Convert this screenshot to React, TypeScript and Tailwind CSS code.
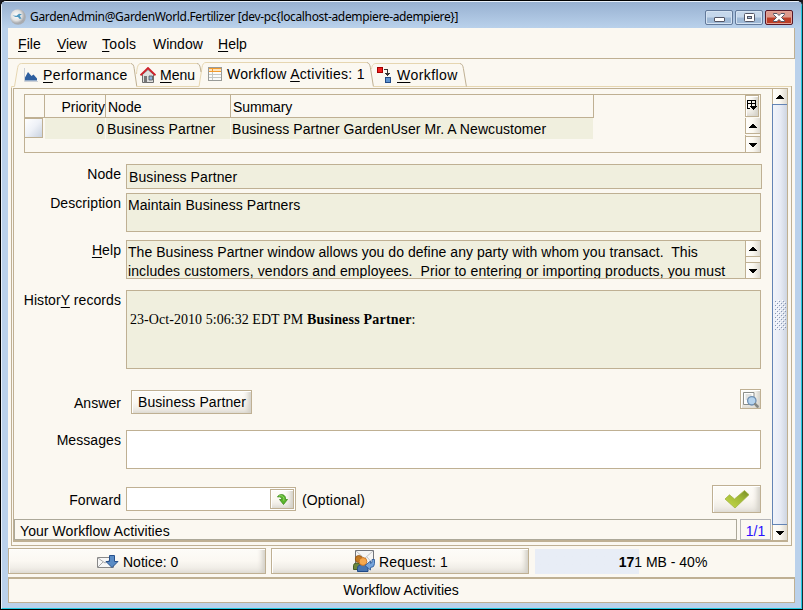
import React from "react";
import type { ReactNode } from "react";

const U = ({ children }: { children: ReactNode }) => (
  <span className="underline decoration-1 underline-offset-[2px] [text-decoration-skip-ink:none]">{children}</span>
);

const bevel =
  "border border-[#bfb093] bg-linear-to-b from-[#fdfcf8] via-[#fbf8f2] to-[#e9e6df] shadow-[inset_1px_1px_0_#ffffff,inset_-5px_-2px_5px_-2px_#d2cfc6]";

function Arrow({ down = false }: { down?: boolean }) {
  return (
    <svg width="8" height="4" viewBox="0 0 8 4" shapeRendering="crispEdges" className="shrink-0">
      {down ? (
        <path d="M0 0h8v1h-1v1h-1v1h-1v1h-2v-1h-1v-1h-1v-1h-1z" fill="#000" />
      ) : (
        <path d="M3 0h2v1h1v1h1v1h1v1h-8v-1h1v-1h1v-1h1z" fill="#000" />
      )}
    </svg>
  );
}

const arrowBox =
  "flex shrink-0 items-center justify-center bg-linear-to-r from-[#fffefb] via-[#fbf8f1] to-[#dedad1]";

function TitleBar() {
  return (
    <div className="flex h-[26px] items-center bg-linear-to-b from-[#98b1d1] to-[#b9d1eb] pl-[8px] pr-[8px]">
      <svg width="16" height="16" viewBox="0 0 16 16" className="mt-[4px] shrink-0">
        <defs>
          <radialGradient id="orb" cx="40%" cy="40%">
            <stop offset="0" stopColor="#fff" />
            <stop offset=".65" stopColor="#e2e2e2" />
            <stop offset="1" stopColor="#a9acb0" />
          </radialGradient>
        </defs>
        <circle cx="8" cy="8" r="7.8" fill="url(#orb)" />
        <path d="M2.500 6.500l4 .3 2.500-2 3 .4-2.300 1.600 1.800 2.700-1.800.6-1.700-2-2.500-.2z" fill="#4f97bf" />
      </svg>
      <span className="ml-[4px] mt-[4px] flex-1 whitespace-nowrap font-['Noto_Sans',sans-serif] text-[12px] leading-[16px] tracking-[-0.35px]">
        GardenAdmin@GardenWorld.Fertilizer [dev-pc&#123;localhost-adempiere-adempiere&#125;]
      </span>
      <div className="mt-[5px] flex gap-[2px]">
        <div className="flex h-[15px] w-[28px] items-center justify-center rounded-[2px] border border-[#62799a] bg-linear-to-b from-[#c5d7eb] from-45% to-[#9fb9d6] to-55% shadow-[inset_0_0_0_1px_#d5e3f2]">
          <span className="mt-[4px] h-[5px] w-[11px] rounded-[1px] border border-[#535666] bg-white" />
        </div>
        <div className="flex h-[15px] w-[28px] items-center justify-center rounded-[2px] border border-[#62799a] bg-linear-to-b from-[#c5d7eb] from-45% to-[#9fb9d6] to-55% shadow-[inset_0_0_0_1px_#d5e3f2]">
          <svg width="11" height="9" viewBox="0 0 11 9">
            <rect x=".5" y=".5" width="10" height="8" rx="1" fill="#fff" stroke="#535666" />
            <rect x="3.500" y="3.500" width="4" height="2" fill="#a9bfd8" stroke="#535666" />
          </svg>
        </div>
        <div className="flex h-[15px] w-[28px] items-center justify-center rounded-[2px] border border-[#571726] bg-linear-to-b from-[#dd9a8d] from-45% to-[#bd3e27] to-55% shadow-[inset_0_0_0_1px_#e3a498]">
          <svg width="12" height="9" viewBox="0 0 12 9">
            <path d="M.5.500h3.500l2 2 2-2h3.500v1l-3 3 3 3v1h-3.500l-2-2-2 2h-3.500v-1l3-3-3-3z" fill="#fff" stroke="#535666" strokeWidth="1" />
          </svg>
        </div>
      </div>
    </div>
  );
}

function MenuBar() {
  return (
    <div className="h-[31px] border-b border-r border-[#bfb093] pt-[8px] pl-[10px] leading-[16px]">
      <div className="flex whitespace-nowrap">
        <span className="w-[39px] tracking-[0.1px]"><U>F</U>ile</span>
        <span className="w-[45px] tracking-[-0.1px]"><U>V</U>iew</span>
        <span className="w-[51px] tracking-[0.35px]"><U>T</U>ools</span>
        <span className="w-[65px]">Window</span>
        <span><U>H</U>elp</span>
      </div>
    </div>
  );
}

function Tabs() {
  return (
    <div className="relative h-[29px]">
      <svg className="absolute left-0 top-0" width="787" height="29" viewBox="8 59 787 29" fill="none">
        <path d="M11.500 88v-1.500h3l3.200-19c.4-2.500 1.600-4 4-4h109" stroke="#e6d6b1" />
        <path d="M131 63.500c2 .4 2.800 2 3.200 5l2.600 18" stroke="#bfb093" />
        <path d="M136.500 86.500h62.500l3-19c.4-3 1.600-5 4-5h161" stroke="#e6d6b1" />
        <path d="M136.500 74c.5-7 1.500-10.500 4.500-10.500h56" stroke="#e6d6b1" />
        <path d="M197 63.500c2 .3 2.800 1.500 3.300 4.500l.7 4" stroke="#bfb093" />
        <path d="M367 62.500c2 .4 3 2.500 3.400 5l3 19" stroke="#bfb093" />
        <path d="M373 86.500h418.500M371.500 69c.6-4 2-5.500 4.500-5.500h84" stroke="#e6d6b1" />
        <path d="M460 63.500c2.200.4 3 2.500 3.400 5l3 18M791.500 86v3" stroke="#bfb093" />
      </svg>
      <div className="relative flex h-full whitespace-nowrap leading-[16px]">
        <div className="flex w-[124px] pl-[15px] pt-[8px]">
          <svg width="16" height="16" viewBox="0 0 16 16" className="shrink-0">
            <path d="M1.500 1v13.500H15" stroke="#ccd0d6" fill="none" />
            <path d="M2 13.500V10.500l3-5.500 3.500 4 2-1.500 3.500 4v2z" fill="#2f5f9f" />
          </svg>
          <span className="ml-[4px] tracking-[0.42px]"><U>P</U>erformance</span>
        </div>
        <div className="flex w-[67px] pl-[8px] pt-[8px]">
          <svg width="16" height="16" viewBox="0 0 16 16" className="shrink-0">
            <path d="M2.500 7.500v8h11v-8L8 2.500z" fill="#dfe0df" stroke="#6c6c6c" />
            <path d="M.5 8.300L8 1l7.500 7.300" fill="none" stroke="#cf202a" strokeWidth="1.800" />
            <path d="M4 9h3v6.500H4z" fill="#777" />
            <path d="M9 9h3.500v4H9z" fill="#8eb3de" stroke="#555" strokeWidth=".8" />
          </svg>
          <span className="ml-[4px]"><U>M</U>enu</span>
        </div>
        <div className="flex w-[170px] pl-[8px] pt-[7px]">
          <svg width="16" height="16" viewBox="0 0 16 16" className="mt-px shrink-0" shapeRendering="crispEdges">
            <rect x="1.500" y=".5" width="13" height="13" fill="#fafafa" stroke="#999b98" />
            <path d="M2 7.500h12M2 10.500h12M5.500 5v8" stroke="#c4c6c3" />
            <path d="M2 1.500h12M2 4.500h12" stroke="#f19a2e" />
            <path d="M2 2h12v2H2z" fill="#fde3bd" />
            <path d="M5.500 2v2" stroke="#f19a2e" />
          </svg>
          <span className="ml-[4px] tracking-[0.3px]">Workflow <U>A</U>ctivities: 1</span>
        </div>
        <div className="flex pl-[8px] pt-[8px]">
          <svg width="16" height="18" viewBox="0 0 16 18" className="mt-[-1px] shrink-0" shapeRendering="crispEdges">
            <rect x="0.500" y="1.500" width="5" height="5" fill="#ef2020" stroke="#a40000" />
            <rect x="8.500" y="11.500" width="5" height="5" fill="#5c92cf" stroke="#204a87" />
            <path d="M7 3.500h3.500v5M8 7.500h5M9 8.500h3M10 9.500h1" stroke="#333" fill="none" />
          </svg>
          <span className="ml-[4px] tracking-[0.45px]"><U>W</U>orkflow</span>
        </div>
      </div>
    </div>
  );
}

function ActivityTable() {
  return (
    <div className="ml-[10px] mt-[5px] flex h-[59px] w-[737px] border border-[#bfb093] leading-[16px]">
      <div className="w-[569px] whitespace-nowrap">
        <div className="flex h-[23px] border-b border-r border-[#bfb093]">
          <div className="w-[20px] border-r border-[#bfb093]" />
          <div className="w-[61px] border-r border-[#bfb093] pt-[4px] text-right">Priority</div>
          <div className="w-[125px] border-r border-[#bfb093] pl-[2px] pt-[4px]">Node</div>
          <div className="pl-[2px] pt-[4px] tracking-[-0.1px]">Summary</div>
        </div>
        <div className="flex h-[21px]">
          <div className="h-[20px] w-[18px] border border-l-0 border-[#bfb093] bg-linear-to-br from-white via-[#eef1f7] to-[#c9d2e0]" />
          <div className="ml-[2px] w-[60px] bg-[#f0efde] pr-[1px] pt-[3px] text-right">0</div>
          <div className="ml-[1px] w-[124px] bg-[#f0efde] pl-[1px] pt-[3px] tracking-[0.1px]">Business Partner</div>
          <div className="ml-[1px] w-[362px] bg-[#f0efde] pl-[1px] pt-[3px] tracking-[0.065px]">
            Business Partner GardenUser Mr. A Newcustomer
          </div>
        </div>
      </div>
      <div className="ml-auto flex w-[15px] flex-col">
        <div className={`flex h-[22px] w-[14px] items-center justify-center ${bevel}`}>
          <svg width="10" height="10" viewBox="0 0 10 10" shapeRendering="crispEdges" className="-mt-[2px] shrink-0">
            <path d="M0 0h9v1H0zM0 3h9v1H0zM0 0h1v9H0zM0 8h3v1H0zM4 0h1v6H4zM8 0h1v6H8z" fill="#000" />
            <path d="M3 6h7v1h-1v1h-1v1h-1v1h-1v-1h-1v-1h-1v-1h-1z" fill="#000" />
          </svg>
        </div>
        <div className={`mt-px h-[16px] border-b border-l border-[#bfb093] ${arrowBox}`}><Arrow /></div>
        <div className="mt-px h-[2px] border-b border-l border-[#bfb093]" />
        <div className={`h-[15px] border-l border-[#bfb093] ${arrowBox}`}><Arrow down /></div>
      </div>
    </div>
  );
}

function Label({ children, className }: { children: ReactNode; className: string }) {
  return (
    <div className={`w-[107px] shrink-0 whitespace-nowrap text-right tracking-[0.07px] ${className}`}>{children}</div>
  );
}

const field = "ml-[5px] border border-[#bfb093] whitespace-nowrap";

function Form() {
  return (
    <div className="leading-[16px]">
      <div className="mt-[11px] flex h-[25px]">
        <Label className="pt-[2px]">Node</Label>
        <div className={`${field} h-[25px] w-[636px] bg-[#f0efde] pl-[2px] pt-[4px] tracking-[0.1px]`}>Business Partner</div>
      </div>
      <div className="mt-[4px] flex h-[39px]">
        <Label className="pt-[2px]">Description</Label>
        <div className={`${field} w-[635px] bg-[#f0efde] pl-[1px] pt-[3px] tracking-[0.07px]`}>Maintain Business Partners</div>
      </div>
      <div className="mt-[8px] flex h-[39px]">
        <Label className="pt-[2px]"><U>H</U>elp</Label>
        <div className={`${field} flex w-[635px] overflow-hidden bg-[#f0efde]`}>
          <div className="h-[37px] flex-1 overflow-hidden whitespace-pre pl-[1px] pt-[2px] leading-[19px]">
            <div className="tracking-[0.05px]">The Business Partner window allows you do define any party with whom you transact.  This</div>
            <div className="tracking-[0.105px]">includes customers, vendors and employees.  Prior to entering or importing products, you must</div>
          </div>
          <div className="flex w-[15px] flex-col border-l border-[#bfb093] bg-[#fbf8f1]">
            <div className={`h-[16px] border-b border-[#bfb093] ${arrowBox}`}><Arrow /></div>
            <div className="mt-px h-[5px] border-b border-[#bfb093]" />
            <div className={`h-[15px] ${arrowBox}`}><Arrow down /></div>
          </div>
        </div>
      </div>
      <div className="mt-[11px] flex h-[79px]">
        <Label className="pt-[2px]">Histor<U>Y</U> records</Label>
        <div className={`${field} w-[635px] bg-[#f0efde] pl-[3px] pt-[21px] font-['Liberation_Serif',serif] text-[14px]`}>
          <span className="tracking-[0.05px]">23-Oct-2010 5:06:32 EDT PM </span>
          <b className="tracking-[0.2px]">Business Partner</b>:
        </div>
      </div>
      <div className="mt-[20px] flex h-[25px]">
        <Label className="pt-[6px]">Answer</Label>
        <div className={`ml-[10px] mt-px h-[24px] w-[121px] whitespace-nowrap pl-[6px] pt-[3px] tracking-[0.08px] ${bevel}`}>Business Partner</div>
        <div className={`ml-auto mr-[11px] flex h-[20px] w-[21px] items-center justify-center ${bevel}`}>
          <svg width="17" height="17" viewBox="0 0 17 17" className="shrink-0">
            <path d="M1.500 1.500h10.500v12h-10.500z" fill="#fdfdfd" stroke="#8b8d89" />
            <path d="M3.500 4h6M3.500 6h4M3.500 8h3" stroke="#c4c6c2" />
            <circle cx="9.800" cy="9.800" r="4.200" fill="#b5d3ee" stroke="#6f8fb1" strokeWidth="1.300" />
            <path d="M13.200 13.200l2.300 2.300" stroke="#858783" strokeWidth="2.600" strokeLinecap="round" />
          </svg>
        </div>
      </div>
      <div className="mt-[16px] flex h-[39px]">
        <Label className="pt-[2px]">Messages</Label>
        <div className={`${field} w-[635px] bg-white`} />
      </div>
      <div className="mt-[16px] flex h-[28px]">
        <Label className="pt-[7px]">Forward</Label>
        <div className={`${field} mt-[2px] flex h-[24px] w-[170px] justify-end bg-white p-px`}>
          <div className={`flex h-[20px] w-[24px] items-center justify-center ${bevel}`}>
            <svg width="11" height="11" viewBox="0 0 11 11" className="shrink-0">
              <path d="M.5 3C2-.3 7.500-.3 8.500 3.500V5.500h2L6.500 10.500 2.500 5.500h2.200c0-2-1.500-3.200-4.200-2.500z" fill="#5ab52c" stroke="#3c8a1b" strokeWidth=".8" />
              <path d="M2 2c2.200-1 4.500 0 4.800 2.300v2.500" fill="none" stroke="#91d663" />
            </svg>
          </div>
        </div>
        <span className="ml-[6px] mt-[7px] tracking-[0.16px]">(Optional)</span>
        <div className={`ml-auto mr-[11px] flex h-[28px] w-[49px] items-center justify-center ${bevel}`}>
          <svg width="26" height="20" viewBox="0 0 26 20" className="shrink-0">
            <defs>
              <linearGradient id="chk" x1="0" y1="1" x2="1" y2="0">
                <stop offset="0" stopColor="#c9dc4c" />
                <stop offset=".6" stopColor="#a0b836" />
                <stop offset="1" stopColor="#758a25" />
              </linearGradient>
            </defs>
            <path d="M1 10l4.500-4.200 5 4.200L20.500 1.500l4.500 4.200L11 19z" fill="url(#chk)" stroke="#a2b443" strokeWidth=".8" />
          </svg>
        </div>
      </div>
    </div>
  );
}

function ScrollBar() {
  return (
    <div className="flex w-[15px] shrink-0 flex-col">
      <div className={`h-[15px] border-l border-[#bfb093] ${arrowBox}`}><Arrow /></div>
      <div className="flex flex-1 items-center justify-center border-y border-l border-[#6384b5] bg-linear-to-r from-[#f1f4fa] via-[#e8ecf6] to-[#ced5e1]">
        <svg width="11" height="30" viewBox="0 0 11 30" shapeRendering="crispEdges">
          <defs>
            <pattern id="grip" width="4" height="4" patternUnits="userSpaceOnUse">
              <path d="M0 1h1v1H0zM2 3h1v1H2z" fill="#8997b2" />
              <path d="M1 2h1v1H1zM3 0h1v1H3z" fill="#fff" />
            </pattern>
          </defs>
          <rect width="11" height="30" fill="url(#grip)" />
        </svg>
      </div>
      <div className={`h-[15px] border-l border-[#bfb093] ${arrowBox}`}><Arrow down /></div>
    </div>
  );
}

function BottomBar() {
  return (
    <div className="flex h-[26px] whitespace-nowrap leading-[16px]">
      <div className={`flex h-[26px] w-[258px] pl-[87px] pt-[5px] ${bevel}`}>
        <svg width="23" height="16" viewBox="0 0 23 16" className="shrink-0">
          <path d="M1.500 3.500h16v10h-16z" fill="#f7f7f7" stroke="#888" />
          <path d="M2 4l7 5 8-5M2 13l5-5" stroke="#aaa" fill="none" />
          <path d="M13.500 1.500h5v6h3.500L16 13.500l-6-6h3.500z" fill="#5b8cc5" stroke="#27518c" />
        </svg>
        <span className="ml-[4px]">Notice: 0</span>
      </div>
      <div className={`ml-[5px] flex h-[26px] w-[258px] pl-[81px] pt-[5px] ${bevel}`}>
        <svg width="22" height="22" viewBox="0 0 22 22" className="-mt-[4px] shrink-0">
          <path d="M2.500.5h18v14h-18z" fill="#f5f5f4" stroke="#73757a" />
          <path d="M3 1l8.500 7.500L20 1M20 14l-6-7" stroke="#c2c4c6" fill="none" />
          <path d="M.5 19.500v-4q0-2.500 3.500-2.500t4.500 3v3.500z" fill="#6c873c" stroke="#465d27" />
          <circle cx="5.800" cy="9" r="3.500" fill="#c47b23" stroke="#8f4e10" strokeWidth=".8" />
          <path d="M4.500 21.500v-3q0-4 5-4t5.500 4v3z" fill="#4775b1" stroke="#204a87" />
          <circle cx="10" cy="11.500" r="3.900" fill="#f6a94e" stroke="#c36b19" strokeWidth=".8" />
          <path d="M21.500 9.500v4q0 4-4 4v2.500l-5.500-4.500 5.500-4.500v2.500q1.500 0 1.500-2v-2z" fill="#76a4dc" stroke="#315f9c" strokeWidth=".9" />
        </svg>
        <span className="ml-[4px] tracking-[0.12px]">Request: 1</span>
      </div>
      <div className="ml-[6px] mt-px flex h-[25px] w-[256px] justify-center bg-linear-to-r from-[#e8edf6] from-[104px] to-transparent to-[104px] pt-[5px]">
        <span><span className="font-bold">17</span>1 MB - 40%</span>
      </div>
    </div>
  );
}

export default function App() {
  return (
    <div className="h-[610px] w-[803px] overflow-hidden bg-[#1a1a22]">
      <div className="h-[610px] w-[803px] overflow-hidden rounded-t-[6px] border border-black border-r-[#152c36] bg-[#bad1eb] font-['Liberation_Sans',Arial,sans-serif] text-[14px] text-black">
        <div className="flex h-[608px] flex-col rounded-t-[5px] border-b border-l border-r border-t border-b-[#21c8df] border-l-[#e9f1fa] border-r-[#21c8df] border-t-[#e9f1fa]">
          <TitleBar />
          <div className="ml-[6px] flex h-[575px] w-[787px] flex-col bg-[#fbf8f1]">
            <MenuBar />
            <Tabs />
            <div className="ml-[3px] h-[458px] w-[781px] border-x border-b border-[#bfb093] pl-px pr-[3px]">
              <div className="flex h-[454px] border border-b-2 border-[#bfb093]">
                <div className="flex w-[758px] flex-col">
                  <ActivityTable />
                  <Form />
                  <div className="mt-[6px] flex h-[22px] leading-[16px]">
                    <div className="w-[723px] border border-[#aca899] pl-[5px] pt-[3px] tracking-[0.08px]">Your Workflow Activities</div>
                    <div className="ml-[3px] w-[31px] border border-[#b5b5b8] pt-[3px] text-center text-[#2a10ff]">1/1</div>
                  </div>
                </div>
                <ScrollBar />
              </div>
            </div>
            <div className="mt-[2px]"><BottomBar /></div>
            <div className="mt-[3px] h-[26px] border border-t-2 border-[#bfb093] pt-[3px] pr-[1px] text-center leading-[16px]">Workflow Activities</div>
          </div>
        </div>
      </div>
    </div>
  );
}
